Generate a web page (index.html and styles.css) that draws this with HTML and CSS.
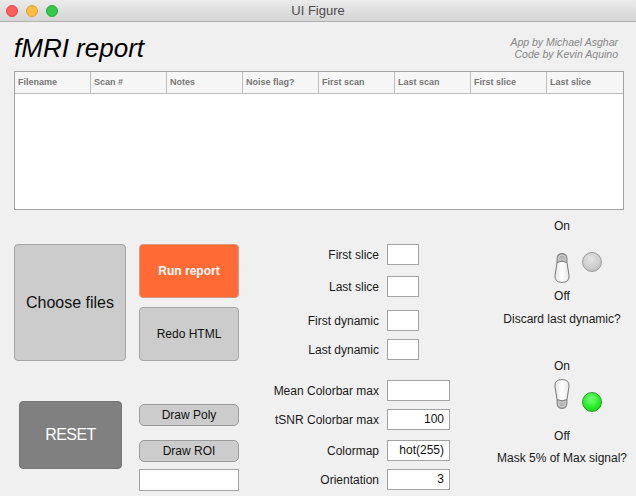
FILE: index.html
```
<!DOCTYPE html>
<html>
<head>
<meta charset="utf-8">
<title>UI Figure</title>
<link rel="stylesheet" href="styles.css">
</head>
<body>
<div class="titlebar">
  <div class="lights"><span class="light red"></span><span class="light amber"></span><span class="light green"></span></div>
  <div class="wtitle">UI Figure</div>
  <div></div>
</div>
<div class="main">
  <div class="head">
    <h1 class="title">fMRI report</h1>
    <div class="credits"><div>App by Michael Asghar</div><div>Code by Kevin Aquino</div></div>
  </div>
  <div class="table">
    <div class="thead">
      <div class="th">Filename</div><div class="th">Scan #</div><div class="th">Notes</div><div class="th">Noise flag?</div>
      <div class="th">First scan</div><div class="th">Last scan</div><div class="th">First slice</div><div class="th">Last slice</div>
    </div>
  </div>
  <div class="lower">
    <div class="col1">
      <div class="btn choose">Choose files</div>
      <div class="btn reset">RESET</div>
    </div>
    <div class="col2">
      <div class="btn run">Run report</div>
      <div class="btn redo">Redo HTML</div>
      <div class="btn small poly">Draw Poly</div>
      <div class="btn small roi">Draw ROI</div>
      <div class="field roifield"></div>
    </div>
    <div class="col3">
      <div class="row r1"><span class="lbl">First slice</span><span class="field"></span></div>
      <div class="row r2"><span class="lbl">Last slice</span><span class="field"></span></div>
      <div class="row r3"><span class="lbl">First dynamic</span><span class="field"></span></div>
      <div class="row r4"><span class="lbl">Last dynamic</span><span class="field"></span></div>
      <div class="row r5"><span class="lbl">Mean Colorbar max</span><span class="field wide"></span></div>
      <div class="row r6"><span class="lbl">tSNR Colorbar max</span><span class="field wide">100</span></div>
      <div class="row r7"><span class="lbl">Colormap</span><span class="field wide">hot(255)</span></div>
      <div class="row r8"><span class="lbl">Orientation</span><span class="field wide">3</span></div>
    </div>
    <div class="col4">
      <div class="txt on1">On</div>
      <div class="switchrow sw1">
        <span></span>
        <svg class="toggle" width="16" height="30" viewBox="0 0 16 30">
          <defs>
            <linearGradient id="cap" x1="0" y1="0" x2="0" y2="1">
              <stop offset="0" stop-color="#9a9a9a"/><stop offset="1" stop-color="#d2d2d2"/>
            </linearGradient>
            <linearGradient id="body" x1="0" y1="0" x2="1" y2="0">
              <stop offset="0" stop-color="#e4e4e4"/><stop offset="0.5" stop-color="#ffffff"/><stop offset="1" stop-color="#e6e6e6"/>
            </linearGradient>
          </defs>
          <path d="M3.2,5 Q3.2,0.6 8,0.6 Q12.8,0.6 12.8,5 L13,9.5 Q8,6.8 3,9.5 Z" fill="url(#cap)" stroke="#7e7e7e" stroke-width="1"/>
          <path d="M4.6,5.6 Q4.6,2.1 8,2.1 Q11.4,2.1 11.4,5.6" fill="none" stroke="#dadada" stroke-width="1"/>
          <path d="M3,9.5 Q8,6.8 13,9.5 L15,22.5 Q15.6,29.4 8,29.4 Q0.4,29.4 1,22.5 Z" fill="url(#body)" stroke="#7a7a7a" stroke-width="1"/>
        </svg>
        <span class="lamp off"></span>
      </div>
      <div class="txt off1">Off</div>
      <div class="txt cap1">Discard last dynamic?</div>
      <div class="txt on2">On</div>
      <div class="switchrow sw2">
        <span></span>
        <svg class="toggle" width="16" height="30" viewBox="0 0 16 30">
          <g transform="translate(0,30) scale(1,-1)">
            <path d="M3.2,5 Q3.2,0.6 8,0.6 Q12.8,0.6 12.8,5 L13,9.5 Q8,6.8 3,9.5 Z" fill="url(#cap)" stroke="#7e7e7e" stroke-width="1"/>
            <path d="M4.6,5.6 Q4.6,2.1 8,2.1 Q11.4,2.1 11.4,5.6" fill="none" stroke="#dadada" stroke-width="1"/>
            <path d="M3,9.5 Q8,6.8 13,9.5 L15,22.5 Q15.6,29.4 8,29.4 Q0.4,29.4 1,22.5 Z" fill="url(#body)" stroke="#7a7a7a" stroke-width="1"/>
          </g>
        </svg>
        <span class="lamp on"></span>
      </div>
      <div class="txt off2">Off</div>
      <div class="txt cap2">Mask 5% of Max signal?</div>
    </div>
  </div>
</div>
</body>
</html>
```
FILE: styles.css
```
* { box-sizing: border-box; }
html, body { margin: 0; padding: 0; }
body {
  width: 636px;
  height: 496px;
  overflow: hidden;
  background: #f0f0f0;
  font-family: "Liberation Sans", Arial, sans-serif;
  color: #1a1a1a;
}
.titlebar {
  height: 22px;
  display: grid;
  grid-template-columns: 1fr auto 1fr;
  align-items: center;
  background: linear-gradient(#ebebeb, #d5d5d5);
  border-bottom: 1px solid #b1b1b1;
}
.lights { display: flex; gap: 8px; padding-left: 6px; }
.light { width: 12px; height: 12px; border-radius: 50%; display: block; }
.light.red { background: #fc605c; border: 0.5px solid #de4a46; }
.light.amber { background: #fdbc40; border: 0.5px solid #dea234; }
.light.green { background: #34c84a; border: 0.5px solid #27a83a; }
.wtitle { font-size: 13px; color: #4d4d4d; }

.main { padding: 0 0 0 14px; }
.head {
  display: flex;
  justify-content: space-between;
  padding-top: 11px;
}
.title {
  margin: 0;
  font-size: 26px;
  line-height: 30px;
  font-style: italic;
  font-weight: normal;
  color: #000;
}
.credits {
  margin-top: 3px;
  margin-right: 18px;
  font-size: 10.5px;
  line-height: 12px;
  font-style: italic;
  color: #858585;
  text-align: right;
}
.table {
  margin-top: 8px;
  width: 610px;
  height: 139px;
  background: #fff;
  border: 1px solid #a3a3a3;
}
.thead {
  display: grid;
  grid-template-columns: repeat(8, 1fr);
  height: 22px;
  background: #f6f6f6;
  border-bottom: 1px solid #bdbdbd;
}
.th {
  border-right: 1px solid #bdbdbd;
  font-size: 9px;
  font-weight: bold;
  color: #777;
  padding-left: 3px;
  line-height: 21px;
  white-space: nowrap;
}
.th:last-child { border-right: none; }

.lower { display: flex; }
.lower > div { flex-shrink: 0; }
.col1 { width: 112px; padding-top: 34px; display: flex; flex-direction: column; }
.col2 { width: 100px; margin-left: 13px; padding-top: 34px; display: flex; flex-direction: column; }
.col3 { width: 201px; margin-left: 10px; padding-top: 34px; display: flex; flex-direction: column; }
.col4 { width: 144px; margin-left: 40px; padding-top: 9px; display: flex; flex-direction: column; align-items: center; }

.btn {
  display: flex;
  align-items: center;
  justify-content: center;
  border: 1px solid #a5a5a5;
  border-radius: 4px;
  background: #cccccc;
  color: #111;
  font-size: 12px;
}
.choose { height: 117px; font-size: 16px; }
.reset {
  margin-top: 40px;
  margin-left: 5px;
  width: 103px;
  height: 68px;
  background: #808080;
  border-color: #767676;
  color: #fff;
  font-size: 16px;
  letter-spacing: -0.6px;
}
.run {
  height: 54px;
  background: #ff6a35;
  border-color: #d99a80;
  color: #fff;
  font-weight: bold;
}
.redo { height: 54px; margin-top: 9px; }
.small { height: 22px; border-radius: 5px; border-color: #9c9c9c; }
.poly { margin-top: 43px; }
.roi { margin-top: 14px; }

.field {
  display: block;
  flex-shrink: 0;
  width: 32px;
  height: 21px;
  background: #fff;
  border: 1px solid #a3a3a3;
  font-size: 12px;
  line-height: 19px;
  text-align: right;
  padding-right: 5px;
  color: #111;
}
.field.wide { width: 63px; }
.field.roifield { margin-top: 7px; width: 100px; height: 22px; }
.row { display: flex; align-items: center; height: 21px; }
.lbl { width: 130px; flex-shrink: 0; text-align: right; margin-right: 8px; font-size: 12px; white-space: nowrap; }
.r2 { margin-top: 11px; }
.r3 { margin-top: 13px; }
.r4 { margin-top: 8px; }
.r5 { margin-top: 20px; }
.r6 { margin-top: 8px; }
.r7 { margin-top: 10px; }
.r8 { margin-top: 8px; }

.txt { font-size: 12px; line-height: 14px; white-space: nowrap; }
.switchrow {
  display: grid;
  grid-template-columns: 1fr 16px 1fr;
  width: 100%;
  height: 30px;
}
.toggle { display: block; }
.lamp {
  display: block;
  width: 20px;
  height: 20px;
  border-radius: 50%;
  margin-left: 12px;
}
.lamp.off {
  background: radial-gradient(circle at 45% 35%, #e4e4e4 0%, #cdcdcd 55%, #b3b3b3 100%);
  border: 1px solid #9b9b9b;
}
.lamp.on {
  background: radial-gradient(circle at 45% 35%, #7dff7d 0%, #22ee22 55%, #10c010 100%);
  border: 1px solid #2c9a2c;
}
.sw1 { margin-top: 20px; }
.sw1 .lamp { margin-top: -1px; }
.off1 { margin-top: 6px; }
.cap1 { margin-top: 9px; }
.on2 { margin-top: 33px; }
.sw2 { margin-top: 6px; }
.sw2 .lamp { margin-top: 13px; }
.off2 { margin-top: 20px; }
.cap2 { margin-top: 8px; }
```
